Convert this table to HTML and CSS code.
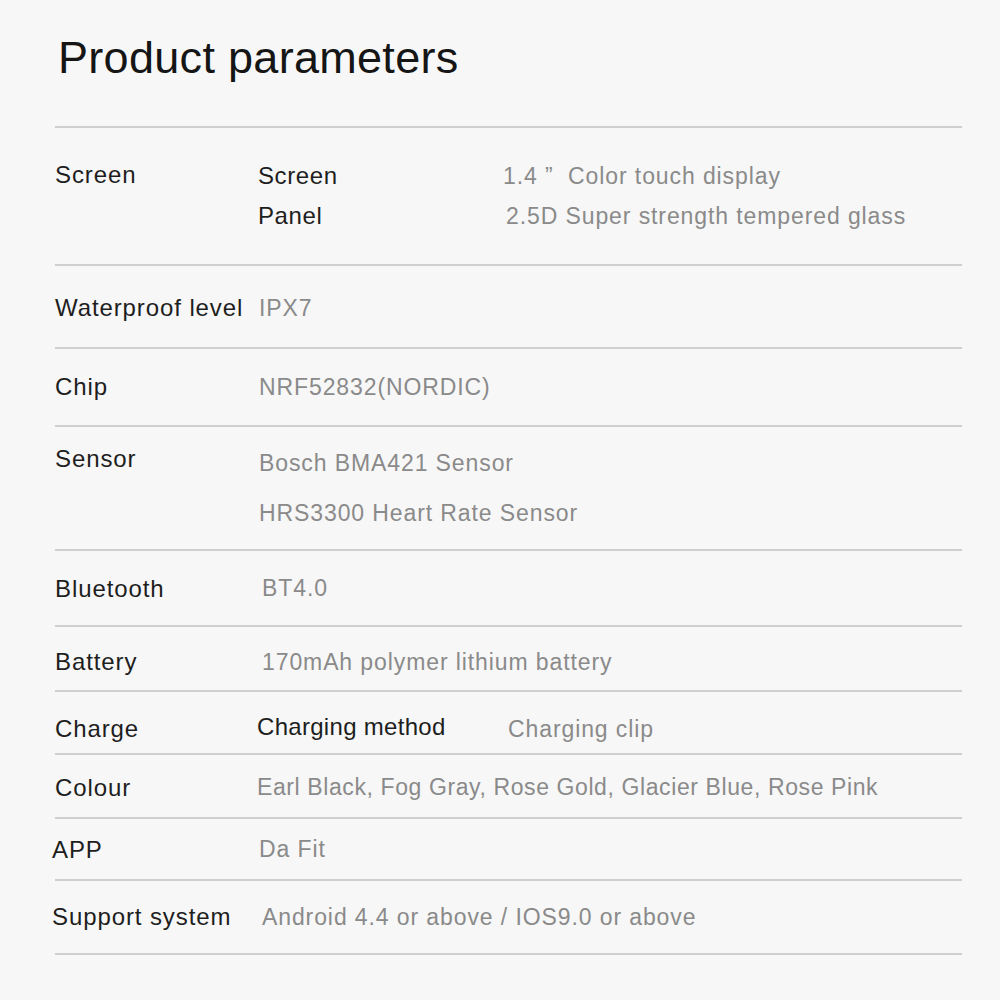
FILE: index.html
```html
<!DOCTYPE html>
<html lang="en">
<head>
<meta charset="utf-8">
<title>Product parameters</title>
<link rel="stylesheet" href="styles.css">
</head>
<body>
<div class="page">
  <h1 class="title">Product parameters</h1>
  <div class="table">
    <div class="row h-screen">
      <div class="label top">Screen</div>
      <div class="pairs">
        <div class="pair"><span class="sublabel">Screen</span><span class="subvalue">1.4 ”&nbsp; Color touch display</span></div>
        <div class="pair"><span class="sublabel">Panel</span><span class="subvalue sv-panel">2.5D Super strength tempered glass</span></div>
      </div>
    </div>
    <div class="row h-water">
      <div class="label">Waterproof level</div>
      <div class="value">IPX7</div>
    </div>
    <div class="row h-chip">
      <div class="label">Chip</div>
      <div class="value">NRF52832(NORDIC)</div>
    </div>
    <div class="row h-sensor">
      <div class="label top">Sensor</div>
      <div class="values tall">
        <div class="value">Bosch BMA421 Sensor</div>
        <div class="value">HRS3300 Heart Rate Sensor</div>
      </div>
    </div>
    <div class="row h-bt">
      <div class="label">Bluetooth</div>
      <div class="value shift">BT4.0</div>
    </div>
    <div class="row h-bat">
      <div class="label">Battery</div>
      <div class="value shift">170mAh polymer lithium battery</div>
    </div>
    <div class="row h-charge">
      <div class="label">Charge</div>
      <div class="pair charge-pair"><span class="sublabel">Charging method</span><span class="subvalue">Charging clip</span></div>
    </div>
    <div class="row h-colour">
      <div class="label">Colour</div>
      <div class="value back">Earl Black, Fog Gray, Rose Gold, Glacier Blue, Rose Pink</div>
    </div>
    <div class="row h-app">
      <div class="label left">APP</div>
      <div class="value">Da Fit</div>
    </div>
    <div class="row h-sys">
      <div class="label left">Support system</div>
      <div class="value shift">Android 4.4 or above / IOS9.0 or above</div>
    </div>
  </div>
</div>
</body>
</html>
```
FILE: styles.css
```css
html, body {
  margin: 0;
  padding: 0;
  background: #f7f7f7;
}
body {
  font-family: "Liberation Sans", Arial, sans-serif;
  color: #1e1e1e;
}
.page {
  width: 1000px;
  height: 1000px;
  box-sizing: border-box;
  padding: 35px 38px 0 55px;
}
.title {
  margin: 0 0 0 3px;
  font-size: 45px;
  line-height: 45px;
  font-weight: 400;
  letter-spacing: 0.3px;
  color: #151515;
  height: 91px;
}
.table {
  border-top: 2px solid #cfcfcf;
}
.row {
  box-sizing: border-box;
  display: grid;
  grid-template-columns: 203px 1fr;
  align-items: center;
  border-bottom: 2px solid #cfcfcf;
  font-size: 23px;
  letter-spacing: 0.9px;
}
.h-screen { height: 138px; }
.h-water { height: 83px; padding-top: 3px; }
.h-chip { height: 78px; }
.h-sensor { height: 124px; }
.h-bt { height: 76px; padding-top: 1px; }
.h-bat { height: 65px; padding-top: 7px; }
.h-charge { height: 63px; padding-top: 13px; }
.h-colour { height: 64px; padding-top: 3px; }
.h-app { height: 62px; padding-top: 1px; }
.h-sys { height: 74px; }

.label {
  color: #1e1e1e;
  white-space: nowrap;
  font-size: 24px;
  letter-spacing: 0.9px;
}
.label.top {
  align-self: start;
  line-height: 40px;
}
.h-screen .label.top { margin-top: 27px; }
.h-sensor .label.top { margin-top: 12px; }
.label.left { margin-left: -3px; }
.value {
  color: #8a8a8a;
  padding-left: 1px;
  white-space: nowrap;
}
.value.shift { padding-left: 4px; }
.value.back { padding-left: 0; margin-left: -1px; letter-spacing: 0.6px; }
.values.tall .value { line-height: 50px; }
.pairs .pair { line-height: 40px; }
.pair {
  display: grid;
  grid-template-columns: 245px 1fr;
  white-space: nowrap;
}
.sublabel {
  color: #1e1e1e;
  font-size: 24px;
  letter-spacing: 0.6px;
}
.subvalue { color: #8a8a8a; }
.sv-panel { padding-left: 3px; }
.charge-pair {
  margin-left: -1px;
  grid-template-columns: 251px 1fr;
  align-items: center;
}
.charge-pair .sublabel { letter-spacing: 0.3px; margin-top: -5px; }
```
